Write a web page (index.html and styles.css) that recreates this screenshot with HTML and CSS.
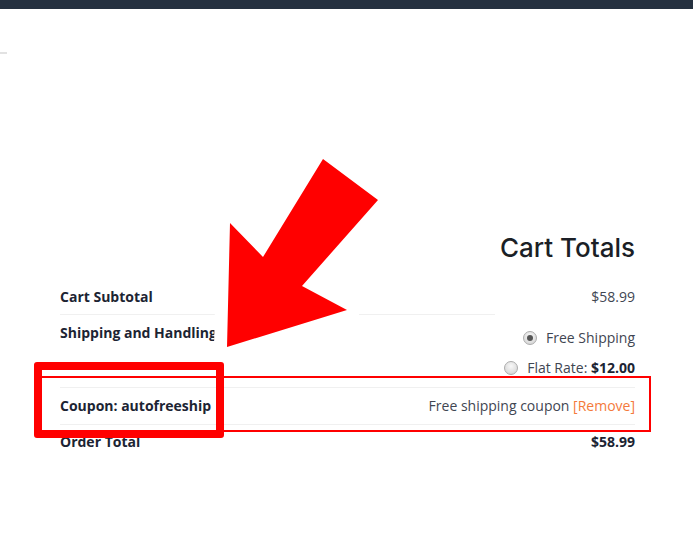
FILE: index.html
```html
<!DOCTYPE html>
<html lang="en">
<head>
    <meta charset="UTF-8">
    <title>Cart Totals</title>
    <link rel="stylesheet" href="styles.css">
</head>
<body>
    <div class="topbar"></div>
    <div class="stub"></div>

    <section class="cart-totals">
        <h2>Cart Totals</h2>
        <table class="totals">
            <tr class="row-subtotal">
                <th>Cart Subtotal</th>
                <td>$58.99</td>
            </tr>
            <tr class="row-shipping">
                <th>Shipping and Handling</th>
                <td>
                    <ul class="methods">
                        <li><span class="radio checked"></span>Free Shipping</li>
                        <li><span class="radio"></span>Flat Rate: <strong>$12.00</strong></li>
                    </ul>
                </td>
            </tr>
            <tr class="row-coupon">
                <th>Coupon: autofreeship</th>
                <td>Free shipping coupon <a href="#" class="remove">[Remove]</a></td>
            </tr>
            <tr class="row-total">
                <th>Order Total</th>
                <td><strong>$58.99</strong></td>
            </tr>
        </table>
    </section>

    <!-- annotations drawn over the screenshot -->
    <div class="mark-thin"></div>
    <div class="mark-thick"></div>
    <svg class="arrow" width="693" height="541" viewBox="0 0 693 541">
        <polygon points="323,159 378,200 302,286 347,310 227,347 230,223 263,257"
                 fill="#ff0000" stroke="#fff" stroke-width="26" stroke-linejoin="round" paint-order="stroke"/>
    </svg>
</body>
</html>
```

FILE: styles.css
```css
* {
    margin: 0;
    padding: 0;
    box-sizing: border-box;
}

body {
    width: 693px;
    height: 541px;
    background: #fff;
    font-family: 'Open Sans', sans-serif;
    font-size: 14px;
    color: #3f4652;
    overflow: hidden;
    position: relative;
}

.topbar {
    height: 9px;
    background: #253140;
}

.stub {
    width: 7px;
    height: 2px;
    margin-top: 43px;
    background: #e2e2e2;
}

.cart-totals {
    margin: 177px 0 0 60px;
    width: 575px;
}

.cart-totals h2 {
    font-family: 'Inter', sans-serif;
    font-weight: 500;
    font-size: 26px;
    line-height: 34px;
    color: #1b1f26;
    text-align: right;
    margin-bottom: 14px;
}

.totals {
    width: 100%;
    border-collapse: collapse;
}

.totals th {
    text-align: left;
    font-weight: 700;
    color: #1c2433;
    width: 155px;
    padding: 8px 0;
    line-height: 20px;
    vertical-align: top;
    white-space: nowrap;
}

.totals td {
    text-align: right;
    padding: 8px 0;
    line-height: 20px;
    vertical-align: top;
}

.totals strong {
    color: #1c2433;
}

.row-subtotal {
    background: linear-gradient(#f0f0f0, #f0f0f0) 0 100% / 435px 1px no-repeat;
}

.row-shipping,
.row-coupon {
    border-bottom: 1px solid #f0f0f0;
}

.row-shipping td {
    padding: 13px 0 9px;
}

.row-total th,
.row-total td {
    padding-top: 7px;
}

.methods {
    list-style: none;
}

.methods li + li {
    margin-top: 10px;
}

.radio {
    display: inline-block;
    vertical-align: -2px;
    width: 14px;
    height: 14px;
    border-radius: 50%;
    border: 1px solid #adadad;
    background: radial-gradient(circle at 50% 35%, #f8f8f8, #cfcfcf);
    margin-right: 9px;
    position: relative;
}

.radio.checked::after {
    content: '';
    position: absolute;
    left: 3px;
    top: 3px;
    width: 6px;
    height: 6px;
    border-radius: 50%;
    background: #555;
}

.remove {
    color: #f47a3c;
    text-decoration: none;
}

.mark-thin {
    position: absolute;
    left: 37px;
    top: 376px;
    width: 614px;
    height: 56px;
    border: 2px solid #f00;
}

.mark-thick {
    position: absolute;
    left: 34px;
    top: 362px;
    width: 190px;
    height: 76px;
    border: 8px solid #f00;
    border-radius: 3px;
}

.arrow {
    position: absolute;
    left: 0;
    top: 0;
    pointer-events: none;
}
```
